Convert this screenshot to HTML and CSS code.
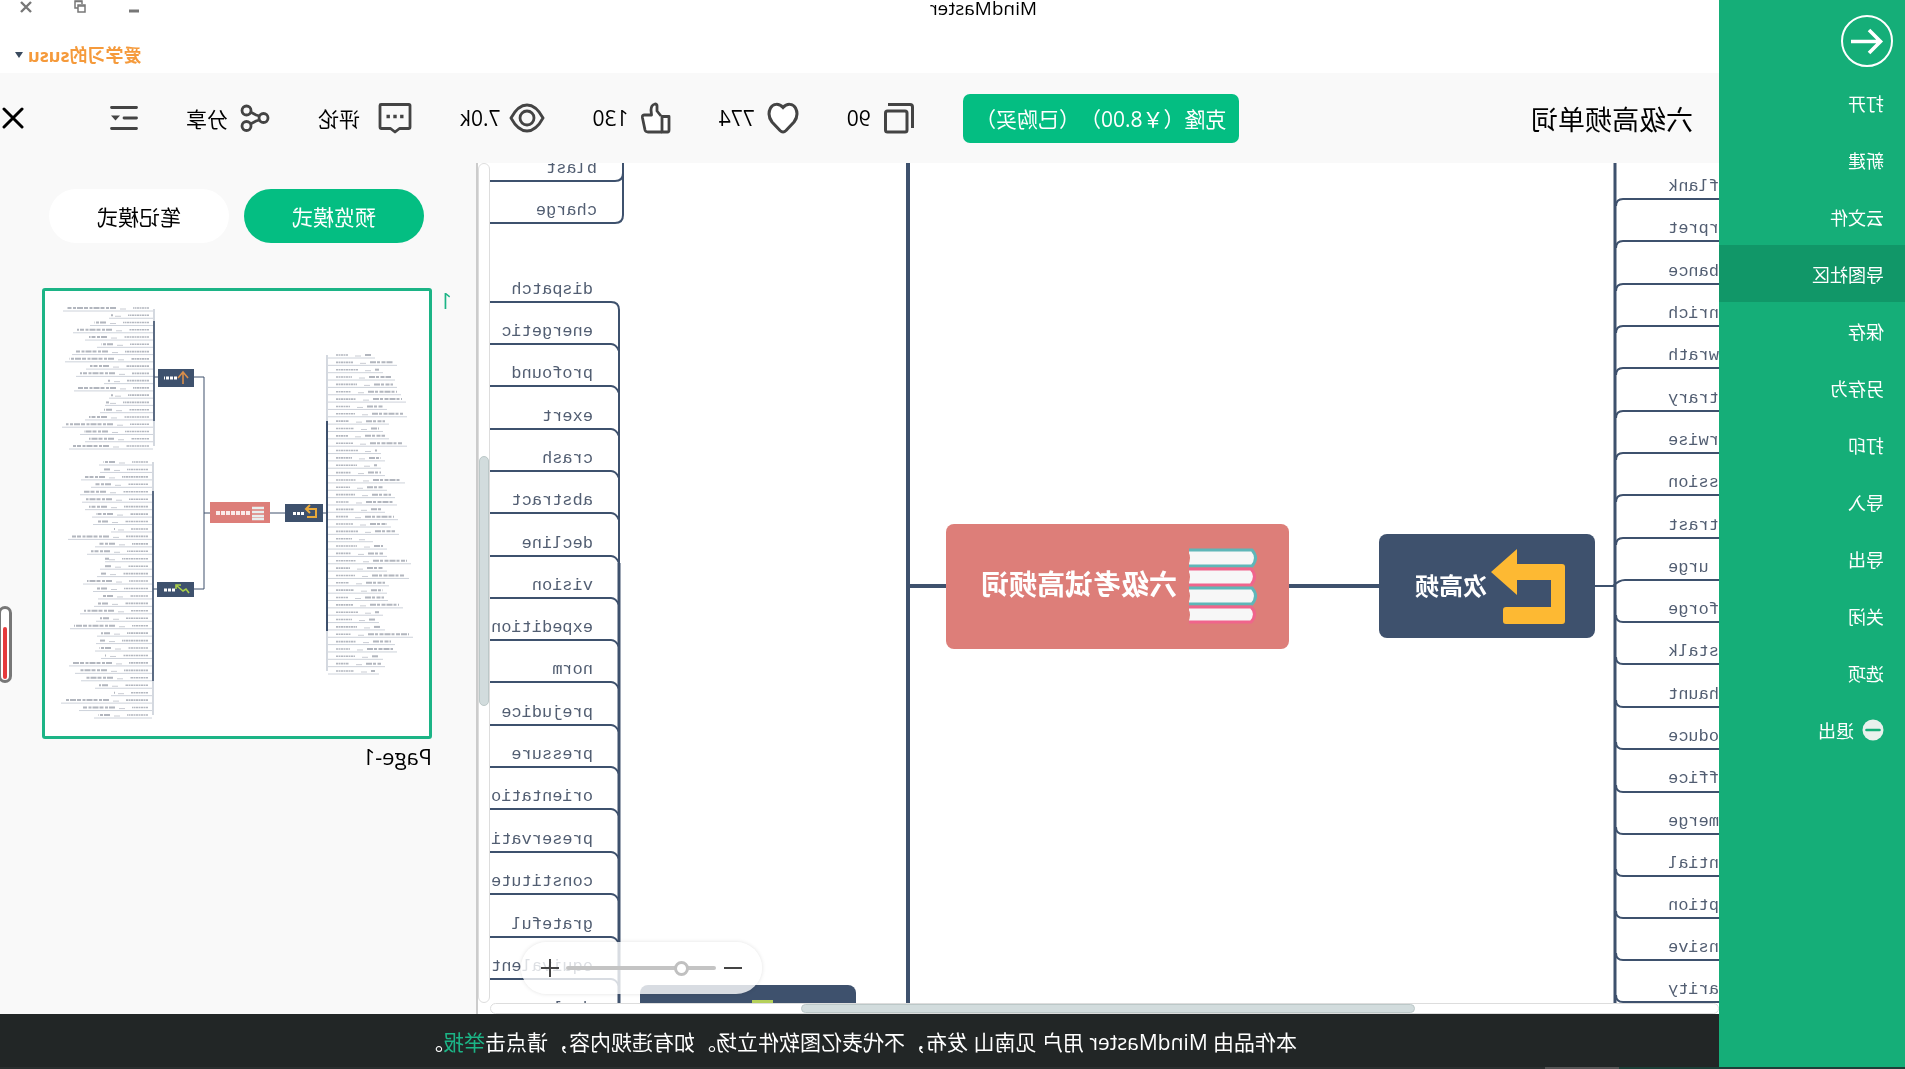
FILE: index.html
```html
<!DOCTYPE html>
<html lang="zh-CN">
<head>
<meta charset="utf-8">
<meta name="viewport" content="width=device-width, initial-scale=1">
<title>MindMaster</title>
<link rel="stylesheet" href="styles.css">
</head>
<body>
<div class="app">
  <nav class="sidebar">
    <button class="back" type="button" aria-label="返回">
      <svg width="54" height="54" viewBox="0 0 54 54" fill="none" stroke="#fff"><circle cx="27" cy="27" r="25" stroke-width="2"/><path d="M43 27.500H13M25 16L13.500 27.500L25 39" stroke-width="3.600"/></svg>
    </button>
    <a class="nav-item" href="#open">打开</a>
    <a class="nav-item" href="#new">新建</a>
    <a class="nav-item" href="#cloud">云文件</a>
    <a class="nav-item active" href="#community">导图社区</a>
    <a class="nav-item" href="#save">保存</a>
    <a class="nav-item" href="#saveas">另存为</a>
    <a class="nav-item" href="#print">打印</a>
    <a class="nav-item" href="#import">导入</a>
    <a class="nav-item" href="#export">导出</a>
    <a class="nav-item" href="#close">关闭</a>
    <a class="nav-item" href="#options">选项</a>
    <a class="nav-item" href="#exit"><svg width="22" height="22" viewBox="0 0 22 22"><circle cx="11" cy="11" r="10.500" fill="#e9f1ed"/><path d="M4.500 11h13" stroke="#15ae78" stroke-width="2.600" stroke-linecap="round"/></svg>退出</a>
  </nav>

  <div class="main">
    <header class="titlebar">
      <h1 class="app-name">MindMaster</h1>
      <div class="account">
        <div class="window-buttons">
          <button type="button" aria-label="最小化"><svg width="12" height="14" viewBox="0 0 12 14"><path d="M1 11h10" stroke="#777" stroke-width="3"/></svg></button>
          <button type="button" aria-label="还原"><svg width="12" height="14" viewBox="0 0 12 14" fill="none" stroke="#777" stroke-width="1.500"><path d="M4 4V1h7v7H8"/><path d="M4 1.500h7"/><rect x="1" y="5" width="7" height="7"/><path d="M1 6h7"/></svg></button>
          <button type="button" aria-label="关闭窗口"><svg width="12" height="14" viewBox="0 0 12 14"><path d="M1 2l10 10M11 2L1 12" stroke="#777" stroke-width="2.400"/></svg></button>
        </div>
        <button class="user" type="button">爱学习的susu<svg width="8" height="6" viewBox="0 0 8 6"><path d="M0 0h8L4 6z" fill="#3a4a5e"/></svg></button>
      </div>
    </header>

    <div class="toolbar">
      <h2 class="doc-title">六级高频单词</h2>
      <button class="clone" type="button">克隆（￥8.00）（已购买）</button>
      <button class="tool" type="button"><svg width="32" height="32" viewBox="0 0 32 32" fill="none" stroke="#444" stroke-width="3"><rect x="8" y="9" width="21.500" height="21" rx="2"/><path d="M2.500 26V5q0-2.500 2.500-2.500H27"/></svg>90</button>
      <button class="tool" type="button"><svg width="32" height="32" viewBox="0 0 32 32" fill="#fff" stroke="#444" stroke-width="3"><path d="M16 5.500C12 1 6 1.500 3.500 6C1 11 2 16 5 20L13 28.500Q16 31.500 19 28.500L27 20C30 16 31 11 28.500 6C26 1.500 20 1 16 5.500Z"/></svg>774</button>
      <button class="tool" type="button"><svg width="30" height="32" viewBox="0 0 30 32" fill="#fff" stroke="#444" stroke-width="2.800" stroke-linejoin="round"><path d="M10 14L14 9V4Q14 2 16 2Q20 3 20 8L19.500 13H27Q29 13 28.500 16L26 28Q25.500 30 23 30H9"/><path d="M2 14.500H9V30H3.500Q2 30 2 28Z"/></svg>130</button>
      <button class="tool near" type="button"><svg width="36" height="32" viewBox="0 0 36 32" fill="none" stroke="#444" stroke-width="2.800"><path d="M2 16Q9 3 18 3T34 16Q27 29 18 29T2 16Z"/><circle cx="18" cy="16" r="7"/></svg>7.0k</button>
      <button class="tool far" type="button"><svg width="34" height="32" viewBox="0 0 34 32" fill="none" stroke="#444" stroke-width="2.800" stroke-linejoin="round"><path d="M3 2.500H31Q32 2.500 32 3.500V25Q32 26.500 30.500 26.500H21.500L17 30L12.500 26.500H3.500Q2 26.500 2 25V3.500Q2 2.500 3 2.500Z"/><path d="M8.500 14.500h3.400M15.300 14.500h3.400M22.100 14.500h3.400" stroke-width="3.600"/></svg>评论</button>
      <button class="tool" type="button"><svg width="30" height="32" viewBox="0 0 30 32" fill="none" stroke="#444" stroke-width="2.800"><circle cx="6.500" cy="16" r="4.500"/><circle cx="23.500" cy="8.500" r="4.500"/><circle cx="23.500" cy="24" r="4.500"/><path d="M10.500 14L14 13L19.500 10M10.500 18L14 19L19.500 22"/></svg>分享</button>
      <button class="tool" type="button" aria-label="菜单"><svg width="28" height="26" viewBox="0 0 28 26" fill="none" stroke="#444" stroke-width="2.800" stroke-linecap="round"><path d="M1.500 2.500h25M1.500 13H14M1.500 23.500h25"/><path d="M18 10.500h9l-4.500 5z" fill="#444" stroke="none"/></svg></button>
      <button class="tool close" type="button" aria-label="关闭"><svg width="22" height="22" viewBox="0 0 22 22"><path d="M2 2L20 20M20 2L2 20" stroke="#000" stroke-width="3" stroke-linecap="round"/></svg></button>
    </div>

    <div class="workspace">
      <section class="canvas">
        <svg class="map" width="1229" height="840" viewBox="0 0 1229 840">
          <g fill="none" stroke="#3e516d" stroke-width="2">
            <path d="M0 36H96q7 0 7 7M0 78H96q7 0 7 7M0 121H96q7 0 7 7M0 163H96q7 0 7 7M0 205H96q7 0 7 7M0 248H96q7 0 7 7M0 290H96q7 0 7 7M0 332H96q7 0 7 7M0 375H96q7 0 7 7M0 417H94q6 0 12 6"/>
            <path d="M0 459H96q7 0 7-7M0 501H96q7 0 7-7M0 544H96q7 0 7-7M0 586H96q7 0 7-7M0 629H96q7 0 7-7M0 671H96q7 0 7-7M0 713H96q7 0 7-7M0 755H96q7 0 7-7M0 797H96q7 0 7-7M0 839H96q7 0 7-7"/>
            <path d="M104 0V840" stroke-width="3"/>
            <path d="M104 423H124"/>
            <path d="M340 423H430M773 423H811" stroke-width="4"/>
            <path d="M811 0V840" stroke-width="4"/>
            <path d="M1229 18H1104q-8 0-8-8M1096 0V52q0 8 8 8H1229"/>
            <path d="M1100 840V147q0-8 8-8H1229M1229 181H1108q-5 0-8 7M1229 223H1108q-5 0-8 7M1229 266H1108q-5 0-8 7M1229 308H1108q-5 0-8 7M1229 350H1108q-5 0-8 7M1229 393H1108q-5 0-8 7M1229 435H1108q-5 0-8 7M1229 477H1108q-5 0-8 7M1229 519H1108q-5 0-8 7M1229 562H1108q-5 0-8 7M1229 604H1108q-5 0-8 7M1229 646H1108q-5 0-8 7M1229 689H1108q-5 0-8 7M1229 731H1108q-5 0-8 7M1229 774H1108q-5 0-8 7M1229 816H1108q-5 0-8 7"/>
            <path d="M1100 400V840" stroke-width="3"/>
          </g>
          <g class="word" text-anchor="end">
            <text x="51" y="28">flank</text><text x="51" y="70">rpret</text><text x="51" y="113">bance</text><text x="51" y="155">nrich</text><text x="51" y="197">wrath</text>
            <text x="51" y="240">trary</text><text x="51" y="282">rwise</text><text x="51" y="324">ssion</text><text x="51" y="367">trast</text><text x="51" y="409">urge</text>
            <text x="51" y="451">forge</text><text x="51" y="493">stalk</text><text x="51" y="536">haunt</text><text x="51" y="578">oduce</text><text x="51" y="620">ffice</text>
            <text x="51" y="663">merge</text><text x="51" y="705">ntial</text><text x="51" y="747">ption</text><text x="51" y="789">nsive</text><text x="51" y="831">arity</text>
          </g>
          <g class="word">
            <text x="1122" y="10">blast</text><text x="1122" y="52">charge</text>
            <text x="1126" y="131">dispatch</text><text x="1126" y="173">energetic</text><text x="1126" y="215">profound</text><text x="1126" y="258">exert</text>
            <text x="1126" y="300">crash</text><text x="1126" y="342">abstract</text><text x="1126" y="385">decline</text><text x="1126" y="427">vision</text>
            <text x="1126" y="469">expedition</text><text x="1126" y="511">norm</text><text x="1126" y="554">prejudice</text><text x="1126" y="596">pressure</text>
            <text x="1126" y="638">orientatio</text><text x="1126" y="681">preservati</text><text x="1126" y="723">constitute</text><text x="1126" y="766">grateful</text>
            <text x="1126" y="808">equivalent</text><text x="1126" y="850">dual</text>
          </g>
          <rect x="124" y="371" width="216" height="104" rx="8" fill="#3e516d"/>
          <path d="M202 386L228 409L202 432V417H168V444H213Q216 444 216 447V458Q216 461 213 461H157Q154 461 154 458V404Q154 401 157 401H202Z" fill="#fdb933"/>
          <text class="topic" x="232" y="432">次高频</text>
          <rect x="430" y="361" width="343" height="125" rx="8" fill="#dd7e79"/>
          <g>
            <path d="M530 387H467Q460 395 467 403H530" fill="#f7f7f7" stroke="#5fb6b8" stroke-width="3"/>
            <path d="M530 406H468Q461 413 468 422H530" fill="#f7f7f7" stroke="#f0648c" stroke-width="3"/>
            <path d="M530 425H467Q460 433 467 441H530" fill="#f7f7f7" stroke="#5fb6b8" stroke-width="3"/>
            <path d="M530 444H468Q461 451 468 459H530" fill="#f7f7f7" stroke="#f0648c" stroke-width="3"/>
            <path d="M531 388q-4 7 0 14zM531 407q-4 7 0 14zM531 426q-4 7 0 14zM531 445q-4 7 0 14z" fill="#dd7e79"/>
          </g>
          <text class="root" x="542" y="432">六级考试高频词</text>
          <rect x="863" y="822" width="216" height="60" rx="8" fill="#3e516d"/>
          <rect x="946" y="837" width="21" height="6" fill="#b5d05a"/>
        </svg>
        <div class="vscroll"><div class="vthumb"></div></div>
        <div class="hscroll"><div class="hthumb"></div></div>
        <div class="zoom">
          <button type="button" aria-label="缩小"><svg width="18" height="18" viewBox="0 0 18 18"><path d="M0 9h18" stroke="#444" stroke-width="2"/></svg></button>
          <input type="range" min="0" max="100" value="20" aria-label="缩放">
          <button type="button" aria-label="放大"><svg width="18" height="18" viewBox="0 0 18 18"><path d="M0 9h18M9 0v18" stroke="#444" stroke-width="2"/></svg></button>
        </div>
      </section>

      <aside class="panel">
        <div class="modes">
          <button class="mode on" type="button">预览模式</button>
          <button class="mode" type="button">笔记模式</button>
        </div>
        <div class="page">
          <span class="page-no">1</span>
          <figure class="page-card">
            <svg id="thumb" class="thumb" width="384" height="445" viewBox="0 0 384 445">
              <g id="rows"></g>
              <g stroke="#3e516d" fill="none">
                <path d="M102 64V380" stroke="#a9b2c0"/><path d="M102 130V340" stroke-width="2"/>
                <path d="M275 18V155M276 171V424" stroke="#a9b2c0"/><path d="M275 30V130M276 200V390" stroke-width="1.600"/>
                <path d="M102 222H159M219 222H225M235 86H225V298H235M271 86H275M271 298H276"/>
              </g>
              <rect x="106" y="213" width="38" height="18" fill="#3e516d"/>
              <path d="M123 218h-10v8h9M119 214l4 4l-4 4" fill="none" stroke="#e9a93a" stroke-width="2" transform="matrix(1 0 0 1 0 0)"/>
              <path d="M125 222.500h12" stroke="#fff" stroke-width="3" stroke-dasharray="3 1"/>
              <rect x="159" y="211" width="60" height="21" fill="#dd7e79"/>
              <path d="M165 217h12M165 221h12M165 225h12M165 228h12" stroke="#e8eeee" stroke-width="2.600"/>
              <path d="M179 222h34" stroke="#fbe9e8" stroke-width="4" stroke-dasharray="4 1"/>
              <rect x="235" y="78" width="36" height="18" fill="#3e516d"/>
              <path d="M246 93V81M241 87l5-6l5 6" fill="none" stroke="#d98e4a" stroke-width="1.600"/>
              <path d="M252 87h13" stroke="#fff" stroke-width="3" stroke-dasharray="3 1"/>
              <rect x="235" y="291" width="37" height="15" fill="#3e516d"/>
              <path d="M240 302l3-4l3 2l6-5M248 294h5v4" fill="none" stroke="#a9cf4a" stroke-width="1.600"/>
              <path d="M254 299h12" stroke="#fff" stroke-width="3" stroke-dasharray="3 1"/>
            </svg>
            <figcaption>Page-1</figcaption>
          </figure>
        </div>
      </aside>
    </div>

    <footer class="notice"><p>本作品由 MindMaster 用户 见南山 发布，不代表亿图软件立场。如有违规内容，请点击<a href="#report">举报</a>。</p></footer>
  </div>
  <div class="level"><div class="level-bar"></div></div>
  <div class="taskbar"></div>
</div>
<script src="thumb.js"></script>
</body>
</html>
```
FILE: styles.css
```css
* { box-sizing: border-box; }
body {
  margin: 0;
  font-family: "Open Sans", "Noto Sans CJK SC", sans-serif;
  font-size: 21px;
  color: #000;
  background: #fff;
  text-spacing-trim: space-all;
}
button {
  margin: 0;
  padding: 0;
  border: 0;
  background: none;
  font: inherit;
  color: inherit;
  white-space: nowrap;
}
h1, h2, p, figure { margin: 0; font-weight: 400; }
a { text-decoration: none; }
svg { display: block; flex: none; }

.app {
  position: relative;
  display: flex;
  min-height: 100vh;
  overflow: hidden;
  transform: scaleX(-1);
}

.sidebar {
  flex: 0 0 186px;
  padding-top: 14px;
  background: #15ae78;
}
.back { display: block; margin: 0 0 6px 11px; }
.nav-item {
  display: flex;
  align-items: center;
  gap: 8px;
  height: 57px;
  padding-left: 21px;
  font-size: 18px;
  color: #fff;
}
.active { background: #119768; }

.main {
  flex: 1;
  min-width: 0;
  display: flex;
  flex-direction: column;
}

.titlebar {
  position: relative;
  display: flex;
  justify-content: flex-end;
  height: 73px;
}
.app-name {
  position: absolute;
  left: 682px;
  top: 0;
  font-size: 19px;
  line-height: 16px;
}
.account {
  display: flex;
  flex-direction: column;
  align-items: flex-end;
  gap: 28px;
  padding-right: 15px;
}
.window-buttons { display: flex; gap: 42px; padding-right: 5px; }
.user {
  display: flex;
  align-items: center;
  gap: 5px;
  font-size: 18px;
  font-weight: 700;
  line-height: 26px;
  color: #f59a3b;
}

.toolbar {
  display: flex;
  align-items: center;
  gap: 48px;
  height: 90px;
  padding: 0 2px 0 26px;
  background: #f9f9f9;
}
.doc-title { flex: 1; font-size: 27px; }
.clone {
  width: 276px;
  height: 49px;
  border-radius: 7px;
  background: #04be82;
  color: #fff;
}
.tool { display: flex; align-items: center; gap: 12px; }
.near { gap: 8px; }
.far { gap: 18px; }
.close { margin-left: 38px; }

.workspace { flex: 1; display: flex; min-height: 0; }
.canvas {
  position: relative;
  flex: 1;
  min-width: 0;
  display: grid;
  grid-template-columns: 1fr 12px;
  grid-template-rows: 1fr 11px;
  border-right: 2px solid #ccc;
  overflow: hidden;
}
.word { font-family: "Liberation Mono", monospace; font-size: 17px; fill: #525e72; }
.topic { font-size: 24px; font-weight: 700; fill: #fff; }
.root { font-size: 28px; font-weight: 700; fill: #fff; }
.vscroll, .hscroll {
  border: 1px solid #ddd;
  border-radius: 6px;
  background: #fff;
}
.vscroll { padding-top: 292px; }
.vthumb {
  height: 250px;
  border: 1px solid #bcc8c8;
  border-radius: 6px;
  background: #d2dcdd;
}
.hscroll { padding-left: 303px; }
.hthumb {
  width: 614px;
  height: 9px;
  border: 1px solid #bcc8c8;
  border-radius: 6px;
  background: #d2dcdd;
}
.zoom {
  position: absolute;
  right: 43px;
  bottom: 20px;
  display: flex;
  align-items: center;
  justify-content: space-between;
  width: 241px;
  height: 52px;
  padding: 0 20px;
  border-radius: 26px;
  background: rgba(255, 255, 255, .8);
  box-shadow: 0 0 4px rgba(0, 0, 0, .12);
}
.zoom input {
  appearance: none;
  width: 150px;
  height: 4px;
  margin: 0;
  border-radius: 2px;
  background: #c4c4c4;
}
.zoom input::-webkit-slider-thumb {
  appearance: none;
  width: 15px;
  height: 15px;
  border: 3px solid #c0c0c0;
  border-radius: 50%;
  background: #fff;
}

.panel { flex: 0 0 476px; background: #f9f9f9; }
.modes { display: flex; gap: 15px; padding: 26px 0 0 52px; }
.mode {
  width: 180px;
  height: 54px;
  border-radius: 27px;
  background: #fff;
}
.on { background: #04be82; color: #fff; }
.page { display: flex; margin-top: 45px; }
.page-no {
  width: 44px;
  padding-right: 8px;
  line-height: 26px;
  text-align: right;
  color: #1cb486;
}
.thumb {
  box-sizing: content-box;
  border: 3px solid #1cb486;
  border-radius: 3px;
  background: #fff;
}
.page-card figcaption { font-size: 22px; line-height: 34px; }

.notice {
  display: flex;
  justify-content: center;
  height: 55px;
  background: #222626;
  color: #fff;
  line-height: 56px;
}
.notice a { color: #1cb486; }

.level {
  position: absolute;
  right: -2px;
  top: 606px;
  width: 14px;
  height: 77px;
  padding: 18px 2px 0;
  border: 3px solid #777;
  border-radius: 7px;
  background: #fff;
}
.level-bar { width: 4px; height: 52px; border-radius: 2px; background: #e53a3c; }
.taskbar {
  position: absolute;
  left: 0;
  right: 0;
  bottom: 0;
  height: 2px;
  background: linear-gradient(90deg, #1d4038 286px, #555 286px, #555 360px, #2b2f2f 360px);
}
```
FILE: thumb.js
```js
// Draws the leaf rows of the page thumbnail.
const rows = document.getElementById('rows');
const NS = 'http://www.w3.org/2000/svg';

function line(x1, x2, y, width, color, dash) {
  const el = document.createElementNS(NS, 'line');
  el.setAttribute('x1', x1);
  el.setAttribute('x2', x2);
  el.setAttribute('y1', y);
  el.setAttribute('y2', y);
  el.setAttribute('stroke', color);
  el.setAttribute('stroke-width', width);
  if (dash) el.setAttribute('stroke-dasharray', dash);
  rows.appendChild(el);
}

// side: -1 grows to the left of the spine, 1 to the right
function branch(spine, side, top, bottom, count, lengths) {
  for (let i = 0; i < count; i++) {
    const y = top + (bottom - top) * i / (count - 1);
    const len = lengths[i % lengths.length];
    const word = 12 + (i * 5) % 11;
    const at = d => spine + side * d;
    line(at(5 + (side < 0 ? 4 : 0)), at(9 + word), y, 1.6, '#b4b8c0', '2 .5');
    line(at(16 + word), at(22 + word), y + 1, 0.8, '#bbbfc8');
    line(at(26 + word), at(len - 4), y, 2, '#b2b6be', '6 1 3 1.5 4 1');
    line(at(1), at(len), y + 3, 0.8, '#c0c6d0');
  }
}

branch(102, -1, 64, 380, 44,
  [48, 70, 56, 68, 70, 74, 79, 60, 80, 62, 56, 62, 80, 54, 58, 54, 58, 78, 60, 68, 70, 58, 71, 64,
   72, 46, 60, 60, 84, 60, 82, 62, 60, 61, 76, 56, 52, 58, 86, 68, 70, 56, 58, 52]);
branch(275, 1, 17, 155, 20,
  [91, 45, 64, 81, 69, 57, 82, 89, 68, 78, 50, 80, 45, 49, 54, 69, 92, 74, 69, 85]);
branch(276, 1, 171, 424, 35,
  [54, 53, 72, 62, 73, 71, 68, 61, 60, 42, 85, 58, 66, 48, 53, 56, 70, 60, 55, 59, 73,
   57, 83, 56, 57, 58, 52, 84, 78, 72, 58, 42, 92, 74, 59]);
```
